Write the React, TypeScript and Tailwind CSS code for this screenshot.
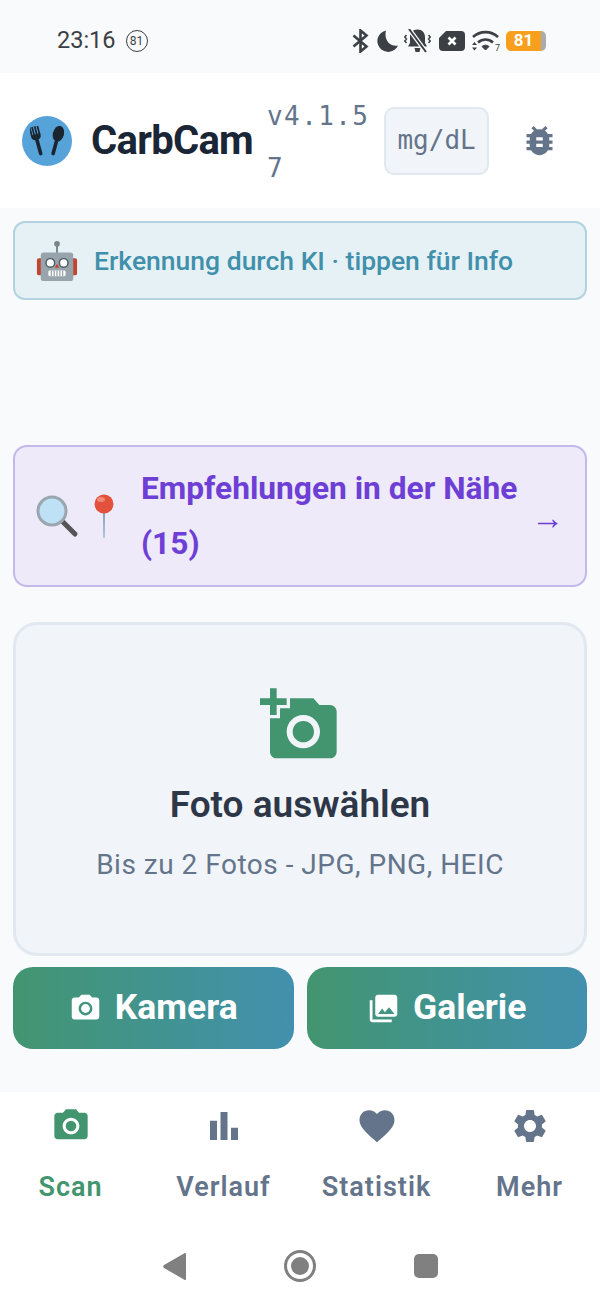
import {
  MdAddAPhoto,
  MdBarChart,
  MdBugReport,
  MdCameraAlt,
  MdFavorite,
  MdPhotoLibrary,
  MdSettings,
} from "react-icons/md";

const sans = "font-['Roboto',sans-serif]";
const mono = "font-['DejaVu_Sans_Mono',monospace]";

function StatusIcons() {
  return (
    <div className="flex items-center text-[#3c3f43]">
      {/* bluetooth */}
      <svg width="17" height="24" viewBox="0 0 17 24" fill="none" stroke="currentColor" strokeWidth="2.6">
        <path d="M1.500 6.500 14.500 17.500 8.500 22.500V1.500L14.500 6.500 1.500 17.500" />
      </svg>
      {/* moon */}
      <svg width="22" height="22" viewBox="0 0 22 22" fill="currentColor" className="ml-[7px]">
        <path d="M10 .5a10.800 10.800 0 1 0 12 15C14.500 17 7.500 10.500 10 .5z" />
      </svg>
      {/* muted bell */}
      <svg width="27" height="24" viewBox="0 0 27 24" fill="currentColor" className="ml-[6px]">
        <path d="M13.500 .5c4.800 0 7.500 3.500 7.500 7.500v6l2 3.500H4l2-3.500V8c0-4 2.700-7.500 7.500-7.500z" />
        <path d="M10.500 19h6l-1 4h-4z" />
        <path d="M5 0 22 23" stroke="#f8fafc" strokeWidth="4.500" />
        <path d="M5 0 22 23" stroke="currentColor" strokeWidth="2" />
        <path d="M2.500 6 .8 8l1.700 2-1.700 2 1.700 2M24.500 6l1.700 2-1.700 2 1.700 2-1.700 2" fill="none" stroke="currentColor" strokeWidth="1.400" />
      </svg>
      {/* sim x */}
      <svg width="26" height="20" viewBox="0 0 26 20" className="ml-[8px]">
        <path d="M7 0h15a4 4 0 0 1 4 4v12a4 4 0 0 1-4 4H4a4 4 0 0 1-4-4V7z" fill="currentColor" />
        <path d="M9.500 6.500l7 7M16.500 6.500l-7 7" stroke="#fff" strokeWidth="2.600" />
      </svg>
      {/* wifi */}
      <div className="relative ml-[6px] h-[22px] w-[29px]">
        <svg width="29" height="22" viewBox="0 0 29 22" fill="none" stroke="currentColor">
          <path d="M2 7c7-6.500 18-6.500 25 0" strokeWidth="2.600" />
          <path d="M7 12.500c4.500-4 10.500-4 15 0" strokeWidth="2.600" />
          <path d="M11 16.500c2-1.800 5-1.800 7 0l-3.500 3.500z" fill="currentColor" strokeWidth="1" />
          <path d="M1 15l2.500-3L6 15zM1 17.500l2.500 3 2.500-3z" fill="currentColor" stroke="none" />
        </svg>
        <span className="absolute right-0 -bottom-[1px] text-[9px] leading-[10px]">7</span>
      </div>
      {/* battery */}
      <div className="ml-[6px] flex items-center">
        <div className="flex h-[20px] w-[35px] items-center justify-center rounded-l-[5px] bg-[#f8a01d] text-[17px] font-bold text-white">
          81
        </div>
        <div className="h-[20px] w-[5px] rounded-r-[5px] bg-[#a9abae]" />
      </div>
    </div>
  );
}

function LogoMark() {
  return (
    <div className="flex size-[50px] shrink-0 items-center justify-center rounded-full bg-[#56a3da]">
      <svg width="34" height="30" viewBox="0 0 34 30" fill="#1b2530" className="mt-[1px]">
        <g transform="rotate(-15 7.500 15)">
          <rect x="2.500" y="0" width="1.700" height="9" />
          <rect x="5" y="0" width="1.700" height="9" />
          <rect x="7.700" y="0" width="1.700" height="9" />
          <rect x="10.400" y="0" width="1.700" height="9" />
          <path d="M2.500 8h9.600v2c0 2-1.300 3.200-3 3.600V28a1.800 1.800 0 0 1-3.600 0V13.600c-1.700-.4-3-1.600-3-3.600z" />
        </g>
        <g transform="rotate(15 26.500 15)">
          <ellipse cx="26.500" cy="7.500" rx="5.500" ry="8" />
          <path d="M24.700 12h3.600v16a1.800 1.800 0 0 1-3.600 0z" />
        </g>
      </svg>
    </div>
  );
}

function RobotEmoji() {
  return (
    <svg width="42" height="42" viewBox="0 0 44 44" className="shrink-0">
      <rect x="1" y="19" width="6" height="18" rx="2" fill="#c2452f" />
      <rect x="37" y="19" width="6" height="18" rx="2" fill="#c2452f" />
      <rect x="21" y="5" width="2" height="10" fill="#78858d" />
      <circle cx="22" cy="4" r="3" fill="#78858d" />
      <rect x="5" y="13" width="34" height="30" rx="3" fill="#98a4ac" />
      <circle cx="15" cy="24" r="4.500" fill="#fff" stroke="#4d5a62" strokeWidth="1.500" />
      <circle cx="29" cy="24" r="4.500" fill="#fff" stroke="#4d5a62" strokeWidth="1.500" />
      <path d="M22 25l2.500 4h-5z" fill="#c2452f" />
      <rect x="13" y="32" width="18" height="6" rx="1.500" fill="#fff" />
      <path d="M16 32v6M19 32v6M22 32v6M25 32v6M28 32v6" stroke="#78858d" />
    </svg>
  );
}

function SearchEmoji() {
  return (
    <svg width="44" height="44" viewBox="0 0 44 44" className="shrink-0">
      <path d="M27 28l12 12" stroke="#555" strokeWidth="5" strokeLinecap="round" />
      <circle cx="16" cy="17" r="14" fill="#bfe1f5" stroke="#9aa7ae" strokeWidth="3" />
    </svg>
  );
}

function PinEmoji() {
  return (
    <svg width="22" height="44" viewBox="0 0 22 44" className="shrink-0">
      <path d="M10 18h2l-.5 26h-1z" fill="#7fa6b8" />
      <circle cx="11" cy="10" r="9.500" fill="#e2513c" />
      <ellipse cx="8" cy="5.500" rx="4" ry="2.500" fill="#f08a76" />
    </svg>
  );
}

const navItems = [
  { label: "Scan", Icon: MdCameraAlt, size: 40, active: true },
  { label: "Verlauf", Icon: MdBarChart, size: 42, active: false },
  { label: "Statistik", Icon: MdFavorite, size: 42, active: false },
  { label: "Mehr", Icon: MdSettings, size: 40, active: false },
];

export default function App() {
  return (
    <div className={`flex h-[1306px] w-[600px] flex-col overflow-hidden bg-[#f8fafc] ${sans}`}>
      {/* Status bar */}
      <div className="flex h-[73px] shrink-0 items-center justify-between pt-[9px] pr-[54px] pl-[57px]">
        <div className="flex items-center gap-[10px] text-[#3c3f43]">
          <span className="text-[23.5px]">23:16</span>
          <span className="flex size-[22px] items-center justify-center rounded-full border-[1.5px] border-[#3c3f43] text-[12px]">
            81
          </span>
        </div>
        <StatusIcons />
      </div>

      {/* Header */}
      <header className="flex h-[135px] shrink-0 items-center bg-white pl-[22px]">
        <LogoMark />
        <h1 className="ml-[19px] text-[40px] font-bold tracking-[-0.7px] text-[#1a2535]">CarbCam</h1>
        <span className={`ml-[14px] w-[110px] pt-[3px] text-[26px] leading-[52px] tracking-[1.4px] break-all text-[#64748b] ${mono}`}>
          v4.1.57
        </span>
        <button className={`ml-[7px] flex h-[68px] w-[105px] items-center justify-center rounded-[10px] border-2 border-[#e2e8f0] bg-[#f1f5f9] text-[26px] text-[#64748b] ${mono}`}>
          mg/dL
        </button>
        <MdBugReport className="ml-[31px] text-[#64748b]" size={39} />
      </header>

      <main className="flex flex-1 flex-col px-[13px] pt-[13px]">
        {/* KI info */}
        <div className="flex h-[79px] shrink-0 items-center gap-[16px] rounded-[12px] border-2 border-[#b2d3df] bg-[#e6f1f6] pl-[21px]">
          <RobotEmoji />
          <span className="text-[26.5px] font-medium text-[#4190ab]">Erkennung durch KI · tippen für Info</span>
        </div>

        {/* Recommendations */}
        <div className="mt-[145px] flex h-[142px] shrink-0 items-center rounded-[14px] border-2 border-[#c5b8ea] bg-[#eeeafa] pr-[21px] pl-[21px]">
          <SearchEmoji />
          <span className="ml-[13px]">
            <PinEmoji />
          </span>
          <span className="ml-[26px] flex-1 text-[31.7px] leading-[55px] font-bold text-[#6d3fd4]">
            Empfehlungen in der Nähe (15)
          </span>
          <span className="pt-[3px] text-[33px] text-[#6d3fd4]">→</span>
        </div>

        {/* Upload */}
        <div className="mt-[35px] flex h-[334px] shrink-0 flex-col items-center rounded-[24px] border-[3px] border-[#e2e8f0] bg-[#f1f5f9] pt-[60px]">
          <MdAddAPhoto className="text-[#43956f]" size={80} />
          <h2 className="mt-[18px] text-[37px] leading-[44px] font-semibold text-[#2d3748]">Foto auswählen</h2>
          <p className="mt-[20px] text-[28px] leading-[36px] tracking-[0.5px] text-[#64748b]">
            Bis zu 2 Fotos - JPG, PNG, HEIC
          </p>
        </div>

        {/* Actions */}
        <div className="mt-[11px] grid shrink-0 grid-cols-2 gap-[13px]">
          <button className="flex h-[82px] items-center justify-center gap-[13px] rounded-[20px] bg-linear-to-r from-[#43956f] to-[#4290ae] text-[35.5px] font-bold text-white">
            <MdCameraAlt size={33} />
            Kamera
          </button>
          <button className="flex h-[82px] items-center justify-center gap-[13px] rounded-[20px] bg-linear-to-r from-[#43956f] to-[#4290ae] text-[35.5px] font-bold text-white">
            <MdPhotoLibrary size={33} />
            Galerie
          </button>
        </div>
      </main>

      {/* Bottom nav */}
      <nav className="grid h-[128px] shrink-0 grid-cols-[repeat(4,153px)] justify-center bg-white pt-[11px]">
        {navItems.map(({ label, Icon, size, active }) => (
          <div
            key={label}
            className={`flex flex-col items-center ${active ? "text-[#43956f]" : "text-[#64748b]"}`}
          >
            <div className="flex h-[46px] items-center justify-center">
              <Icon size={size} />
            </div>
            <span className="mt-[22px] text-[27px] leading-[32px] font-semibold tracking-[1px]">{label}</span>
          </div>
        ))}
      </nav>

      {/* Android nav */}
      <div className="flex h-[86px] shrink-0 items-center justify-center gap-[98px] bg-white pt-[6px]">
        <svg width="23" height="27" viewBox="0 0 23 27" fill="#808080">
          <path d="M23 1v25a1 1 0 0 1-1.600.8L1 15a2 2 0 0 1 0-3L21.400.2A1 1 0 0 1 23 1z" />
        </svg>
        <svg width="32" height="32" viewBox="0 0 32 32">
          <circle cx="16" cy="16" r="14.500" fill="none" stroke="#808080" strokeWidth="3" />
          <circle cx="16" cy="16" r="9" fill="#808080" />
        </svg>
        <div className="size-[24px] rounded-[5px] bg-[#808080]" />
      </div>
    </div>
  );
}
